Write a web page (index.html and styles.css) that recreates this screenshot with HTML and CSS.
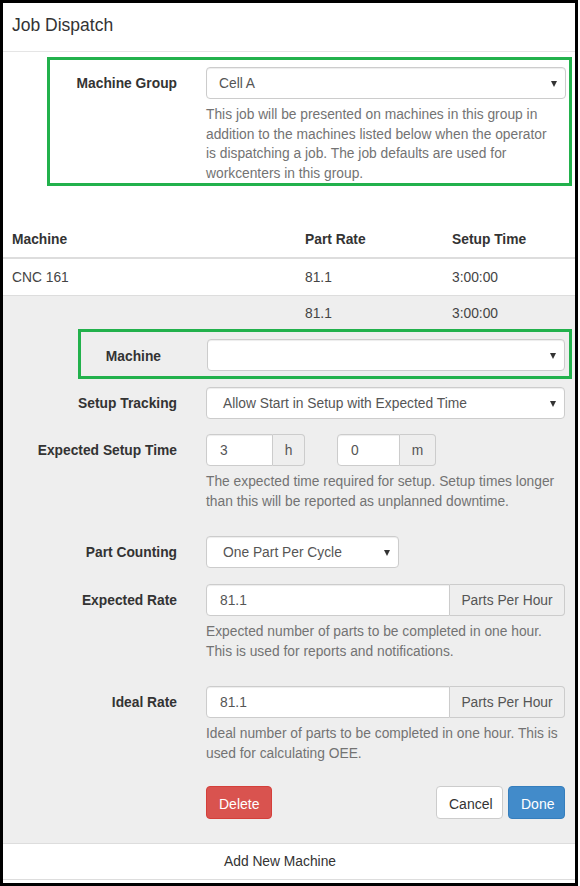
FILE: index.html
```html
<!DOCTYPE html>
<html>
<head>
<meta charset="utf-8">
<link rel="stylesheet" href="styles.css">
</head>
<body>
<div class="frame">
  <div class="header">Job Dispatch</div>

  <div class="group-box">
    <div class="label lbl-group">Machine Group</div>
    <div class="control-col">
      <div class="select sel-group"><span>Cell A</span><span class="caret"></span></div>
      <div class="help">This job will be presented on machines in this group in<br>addition to the machines listed below when the operator<br>is dispatching a job. The job defaults are used for<br>workcenters in this group.</div>
    </div>
  </div>

  <table class="machines">
    <thead>
      <tr><th class="c1">Machine</th><th class="c2">Part Rate</th><th class="c3">Setup Time</th></tr>
    </thead>
    <tbody>
      <tr><td>CNC 161</td><td>81.1</td><td>3:00:00</td></tr>
      <tr class="editing"><td></td><td>81.1</td><td>3:00:00</td></tr>
    </tbody>
  </table>

  <div class="editor">
    <div class="machine-box">
      <div class="label lbl-machine">Machine</div>
      <div class="select sel-machine"><span></span><span class="caret"></span></div>
    </div>

    <div class="row first">
      <div class="label">Setup Tracking</div>
      <div class="control-col">
        <div class="select"><span>Allow Start in Setup with Expected Time</span><span class="caret"></span></div>
      </div>
    </div>

    <div class="row">
      <div class="label">Expected Setup Time</div>
      <div class="control-col">
        <div class="time-pair">
          <div class="input-group ig-h"><div class="input">3</div><div class="addon">h</div></div>
          <div class="input-group ig-m"><div class="input">0</div><div class="addon">m</div></div>
        </div>
        <div class="help">The expected time required for setup. Setup times longer<br>than this will be reported as unplanned downtime.</div>
      </div>
    </div>

    <div class="row">
      <div class="label">Part Counting</div>
      <div class="control-col">
        <div class="select sel-count"><span>One Part Per Cycle</span><span class="caret"></span></div>
      </div>
    </div>

    <div class="row rate-row">
      <div class="label">Expected Rate</div>
      <div class="control-col">
        <div class="input-group ig-rate"><div class="input">81.1</div><div class="addon">Parts Per Hour</div></div>
        <div class="help">Expected number of parts to be completed in one hour.<br>This is used for reports and notifications.</div>
      </div>
    </div>

    <div class="row">
      <div class="label">Ideal Rate</div>
      <div class="control-col">
        <div class="input-group ig-rate"><div class="input">81.1</div><div class="addon">Parts Per Hour</div></div>
        <div class="help">Ideal number of parts to be completed in one hour. This is<br>used for calculating OEE.</div>
      </div>
    </div>

    <div class="buttons">
      <button class="btn btn-danger">Delete</button>
      <div class="right-btns">
        <button class="btn btn-default">Cancel</button>
        <button class="btn btn-primary">Done</button>
      </div>
    </div>
  </div>

  <div class="footer">Add New Machine</div>
</div>
</body>
</html>
```

FILE: styles.css
```css
* { box-sizing: border-box; }
html, body { margin: 0; padding: 0; background: #fff; }
body {
  font-family: "Liberation Sans", Arial, sans-serif;
  font-size: 13.8px;
  line-height: 20px;
  color: #333;
}
.frame {
  width: 578px;
  height: 886px;
  border: 3px solid #000;
  background: #fff;
  overflow: hidden;
}
.header {
  height: 49px;
  padding: 12px 9px 0;
  font-size: 17.5px;
  line-height: 20px;
  color: #333;
  border-bottom: 1px solid #e5e5e5;
}
.group-box {
  display: flex;
  align-items: flex-start;
  margin: 5px 3px 0 44px;
  border: 3px solid #22b14c;
  padding: 7px 3px 0 0;
  height: 129px;
}
.label {
  font-weight: bold;
  color: #333;
  text-align: right;
  width: 174px;
  padding-top: 7px;
  margin-right: 29px;
  flex: none;
}
.lbl-group { width: 127px; }
.control-col { flex: 1; min-width: 0; }
.select {
  height: 32px;
  border: 1px solid #ccc;
  border-radius: 4px;
  background: #fff;
  box-shadow: inset 0 1px 1px rgba(0,0,0,.075);
  display: flex;
  align-items: center;
  justify-content: space-between;
  padding: 1px 8px 0 16px;
  color: #555;
}
.sel-group { padding-left: 12px; }
.caret {
  width: 0;
  height: 0;
  border-left: 3.5px solid transparent;
  border-right: 3.5px solid transparent;
  border-top: 6px solid #333;
}
.help {
  color: #737373;
  margin-top: 6px;
  line-height: 19.5px;
}
.row .help { line-height: 20px; margin-bottom: 9px; }
table.machines {
  width: 100%;
  border-collapse: collapse;
  margin-top: 35px;
}
.machines th, .machines td {
  text-align: left;
  padding: 9px 8px 7px 9px;
  line-height: 20px;
}
.machines th { border-bottom: 2px solid #ddd; font-weight: bold; color: #333; }
.machines td { border-bottom: 1px solid #ddd; color: #444; }
.machines th.c1 { width: 293px; }
.machines th.c2 { width: 147px; padding-left: 9px; }
.machines tr.editing td { background: #eee; border-bottom: none; padding: 8px 8px 5px 9px; }
.editor {
  background: #eee;
  padding: 0 10px 24px 0;
}
.machine-box {
  display: flex;
  align-items: flex-start;
  margin: 0 -7px 0 75px;
  border: 3px solid #22b14c;
  padding: 7px 4px 5px 0;
}
.lbl-machine { width: 80px; margin-right: 46px; padding-top: 8px; }
.sel-machine { flex: 1; }
.row {
  display: flex;
  align-items: flex-start;
  margin-top: 15px;
}
.row.first { margin-top: 8px; }
.row.rate-row { margin-top: 16px; }
.sel-count { width: 193px; }
.time-pair { display: flex; gap: 32px; }
.input-group { display: flex; height: 32px; }
.input {
  background: #fff;
  border: 1px solid #ccc;
  border-radius: 4px 0 0 4px;
  box-shadow: inset 0 1px 1px rgba(0,0,0,.075);
  padding: 1px 13px 0;
  line-height: 30px;
  color: #555;
}
.addon {
  background: #eee;
  border: 1px solid #ccc;
  border-left: none;
  border-radius: 0 4px 4px 0;
  padding-top: 1px;
  line-height: 29px;
  color: #555;
  text-align: center;
}
.ig-h .input { width: 67px; }
.ig-h .addon { width: 32px; }
.ig-m .input { width: 63px; }
.ig-m .addon { width: 36px; }
.ig-rate .input { flex: 1; }
.ig-rate .addon { width: 115px; }
.buttons {
  display: flex;
  justify-content: space-between;
  margin: 13px 0 0 203px;
}
.right-btns { display: flex; gap: 5px; }
.btn {
  font-family: "Liberation Sans", Arial, sans-serif;
  font-size: 14px;
  line-height: 20px;
  height: 33px;
  padding: 7px 12px 5px;
  border-radius: 4px;
  border: 1px solid transparent;
  cursor: pointer;
}
.btn-danger { background: #d9534f; border-color: #d43f3a; color: #fff; width: 66px; }
.btn-default { background: #fff; border-color: #ccc; color: #333; width: 67px; }
.btn-primary { background: #428bca; border-color: #357ebd; color: #fff; width: 57px; }
.footer {
  border-top: 1px solid #ddd;
  border-bottom: 1px solid #ddd;
  padding: 8px 18px 7px 0;
  text-align: center;
  line-height: 20px;
  color: #333;
}
```
